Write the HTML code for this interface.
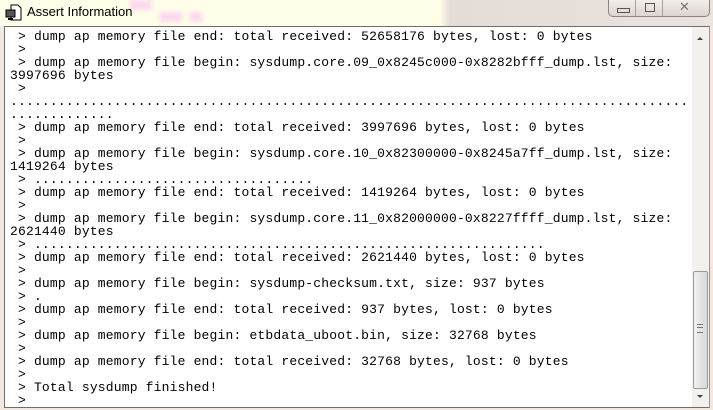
<!DOCTYPE html>
<html><head><style>
html,body{margin:0;padding:0;width:713px;height:410px;overflow:hidden;background:#f3e8e0;position:relative}
.title{position:absolute;left:0;top:0;width:713px;height:26px;background:linear-gradient(90deg,#fefee9 0,#fefee9 440px,#e4dcd6 450px,#ebe3de 100%)}
.blot{position:absolute;background:#fcd8f0;filter:blur(2px)}
.ttext{position:absolute;left:27px;top:4px;font:13px "Liberation Sans",sans-serif;color:#000}
.btns{position:absolute;left:608px;top:-1px;width:100px;height:17px;border:1px solid #8a8580;border-top:none;border-radius:0 0 5px 5px;background:linear-gradient(#f4f0ec,#dcd6d0)}
.btns div{position:absolute;top:0;height:17px;border-right:1px solid #a8a29c}
.box{position:absolute;left:4px;top:26px;width:704px;height:380px;border:1px solid #6e6e6e;border-right-color:#999;background:#fff;overflow:hidden}
pre{margin:0;position:absolute;left:5px;top:3px;font:13px/13px "Liberation Mono",monospace;color:#000;letter-spacing:0.18px}
.sb{position:absolute;right:0;top:0;width:17px;height:380px;background:#f2f1ee}
.thumb{position:absolute;left:1px;top:244px;width:13px;height:116px;border:1px solid #9a9a9a;border-radius:2px;background:linear-gradient(90deg,#f0f0f0,#d8d8d8)}
</style></head><body>
<div class="title">
 <div class="blot" style="left:130px;top:0;width:22px;height:10px"></div>
 <div class="blot" style="left:160px;top:12px;width:22px;height:10px"></div>
 <div class="blot" style="left:190px;top:12px;width:12px;height:10px"></div>
 <svg style="position:absolute;left:5px;top:4px" width="18" height="18" viewBox="0 0 18 18"><path d="M6 1h7l3 3v12H6z" fill="#fff" stroke="#000"/><rect x="1" y="6" width="9" height="7" fill="#555" stroke="#000"/><rect x="3" y="14" width="5" height="2" fill="#000"/></svg>
 <div class="ttext">Assert Information</div>
 <div class="btns"><div style="left:0;width:26px"></div><div style="left:27px;width:26px"></div>
  <span style="position:absolute;left:8px;top:9px;width:11px;height:3px;border:1px solid #555"></span>
  <span style="position:absolute;left:36px;top:4px;width:8px;height:7px;border:1px solid #555"></span>
  <span style="position:absolute;left:70px;top:0;font:13px 'Liberation Sans';color:#777">✕</span></div>
</div>
<div class="box">
<pre> &gt; dump ap memory file end: total received: 52658176 bytes, lost: 0 bytes
 &gt;
 &gt; dump ap memory file begin: sysdump.core.09_0x8245c000-0x8282bfff_dump.lst, size:
3997696 bytes
 &gt;
.....................................................................................
.............
 &gt; dump ap memory file end: total received: 3997696 bytes, lost: 0 bytes
 &gt;
 &gt; dump ap memory file begin: sysdump.core.10_0x82300000-0x8245a7ff_dump.lst, size:
1419264 bytes
 &gt; ...................................
 &gt; dump ap memory file end: total received: 1419264 bytes, lost: 0 bytes
 &gt;
 &gt; dump ap memory file begin: sysdump.core.11_0x82000000-0x8227ffff_dump.lst, size:
2621440 bytes
 &gt; ................................................................
 &gt; dump ap memory file end: total received: 2621440 bytes, lost: 0 bytes
 &gt;
 &gt; dump ap memory file begin: sysdump-checksum.txt, size: 937 bytes
 &gt; .
 &gt; dump ap memory file end: total received: 937 bytes, lost: 0 bytes
 &gt;
 &gt; dump ap memory file begin: etbdata_uboot.bin, size: 32768 bytes
 &gt;
 &gt; dump ap memory file end: total received: 32768 bytes, lost: 0 bytes
 &gt;
 &gt; Total sysdump finished!
 &gt;</pre>
<div class="sb">
 <div style="position:absolute;left:5px;top:10px;border:3px solid transparent;border-bottom:3px solid #444;border-top:none"></div>
 <div class="thumb"><div style="position:absolute;left:3px;top:52px;width:6px;height:7px;border-top:1px solid #777;border-bottom:1px solid #777"><div style="margin-top:2px;border-top:1px solid #777;height:0"></div></div></div>
 <div style="position:absolute;left:5px;top:368px;border:3px solid transparent;border-top:3px solid #444;border-bottom:none"></div>
</div>
</div>
</body></html>
